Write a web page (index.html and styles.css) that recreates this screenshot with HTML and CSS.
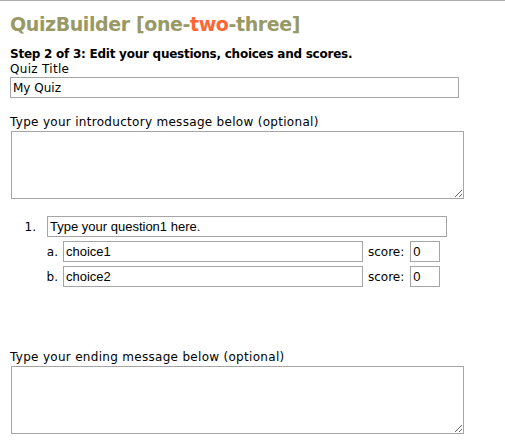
FILE: index.html
```html
<!DOCTYPE html>
<html>
<head>
<meta charset="utf-8">
<title>QuizBuilder</title>
<link rel="stylesheet" href="styles.css">
</head>
<body>
<div class="page">
  <h1 class="title">QuizBuilder [one-<span class="hl">two</span>-three]</h1>
  <div class="step">Step 2 of 3: Edit your questions, choices and scores.</div>
  <label class="lbl" for="qt">Quiz Title</label>
  <input id="qt" class="field title-field" type="text" value="My Quiz">
  <label class="lbl lbl-gap" for="intro">Type your introductory message below (optional)</label>
  <textarea id="intro" class="area"></textarea>

  <div class="questions">
    <div class="qrow">
      <span class="num">1.</span>
      <input class="field qfield" type="text" value="Type your question1 here.">
    </div>
    <div class="crow">
      <span class="letter">a.</span>
      <input class="field cfield" type="text" value="choice1">
      <span class="score-lbl">score:</span>
      <input class="field sfield" type="text" value="0">
    </div>
    <div class="crow">
      <span class="letter">b.</span>
      <input class="field cfield" type="text" value="choice2">
      <span class="score-lbl">score:</span>
      <input class="field sfield" type="text" value="0">
    </div>
  </div>

  <label class="lbl end-lbl" for="ending">Type your ending message below (optional)</label>
  <textarea id="ending" class="area"></textarea>
</div>
</body>
</html>
```

FILE: styles.css
```css
html, body {
  margin: 0;
  padding: 0;
  background: #ffffff;
}

body {
  font-family: "DejaVu Sans", Verdana, sans-serif;
  font-size: 12px;
  color: #000000;
}

.page {
  border-top: 1px solid #acacac;
  padding: 0 10px;
}

.title {
  margin: 11px 0 0 0;
  font-size: 19px;
  letter-spacing: -0.4px;
  line-height: 24px;
  font-weight: bold;
  color: #999966;
}

.title .hl {
  color: #ff6633;
}

.step {
  margin-top: 11px;
  font-weight: bold;
  letter-spacing: -0.25px;
  line-height: 15px;
}

.lbl {
  display: block;
  line-height: 15px;
  letter-spacing: 0.3px;
}

.lbl-gap {
  margin-top: 17px;
}

.field {
  display: block;
  box-sizing: border-box;
  height: 21px;
  margin: 0;
  padding: 0 2px;
  border: 1px solid #a5a5a5;
  background: #ffffff;
  color: #000000;
  font-family: "Liberation Sans", Arial, sans-serif;
  font-size: 13px;
  outline: none;
}

.title-field {
  width: 449px;
  font-family: "DejaVu Sans", Verdana, sans-serif;
  font-size: 12px;
}

.area {
  display: block;
  box-sizing: border-box;
  width: 453px;
  height: 68px;
  margin: 1px 0 0 1px;
  padding: 2px;
  border: 1px solid #a5a5a5;
  font-family: "DejaVu Sans", Verdana, sans-serif;
  font-size: 12px;
  resize: both;
}

.questions {
  margin-top: 17px;
  display: flex;
  flex-direction: column;
  gap: 4px;
}

.qrow, .crow {
  display: flex;
  align-items: center;
}

.num {
  box-sizing: border-box;
  width: 37px;
  padding-right: 11px;
  text-align: right;
}

.qfield {
  width: 400px;
}

.letter {
  box-sizing: border-box;
  width: 53px;
  padding-right: 5px;
  text-align: right;
}

.cfield {
  width: 300px;
}

.score-lbl {
  margin: 0 6px 0 5px;
}

.sfield {
  width: 30px;
}

.end-lbl {
  margin-top: 63px;
}
```
